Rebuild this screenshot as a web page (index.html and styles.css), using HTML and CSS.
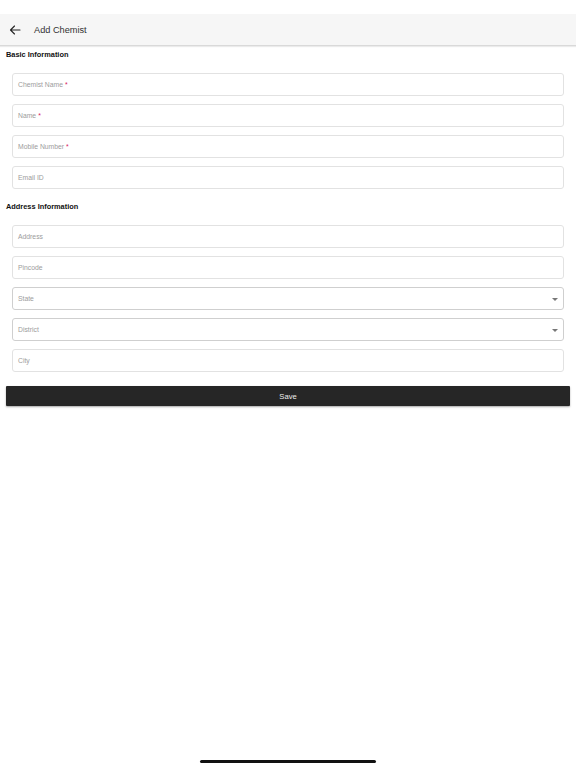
FILE: index.html
```html
<!DOCTYPE html>
<html>
<head>
<meta charset="utf-8">
<link rel="stylesheet" href="styles.css">
</head>
<body>
<div class="screen">
  <div class="status"></div>
  <header class="appbar">
    <svg class="back" width="12" height="10" viewBox="0 0 12 10">
      <path d="M11 5H1.5M5.5 1L1.5 5l4 4" fill="none" stroke="#222" stroke-width="1.1" stroke-linecap="round" stroke-linejoin="round"/>
    </svg>
    <span class="title">Add Chemist</span>
  </header>
  <main class="content">
    <div class="section-title">Basic Information</div>
    <div class="fields">
      <div class="field">Chemist Name <span class="req">*</span></div>
      <div class="field">Name <span class="req">*</span></div>
      <div class="field">Mobile Number <span class="req">*</span></div>
      <div class="field">Email ID</div>
    </div>
    <div class="section-title second">Address Information</div>
    <div class="fields">
      <div class="field">Address</div>
      <div class="field">Pincode</div>
      <div class="field select">State<span class="caret"></span></div>
      <div class="field select">District<span class="caret"></span></div>
      <div class="field">City</div>
    </div>
    <button class="save">Save</button>
  </main>
  <div class="home-indicator"></div>
</div>
</body>
</html>
```
FILE: styles.css
```css
* { box-sizing: border-box; }
html, body { margin: 0; padding: 0; background: #fff; }
body { font-family: "Liberation Sans", Arial, sans-serif; color: #222; }
.screen { position: relative; width: 576px; height: 768px; overflow: hidden; background: #fff; }
.status { height: 14px; background: #fff; }
.appbar {
  height: 32px;
  background: #f6f6f6;
  display: flex;
  align-items: center;
  padding-left: 9px;
  border-bottom: 1px solid #d9d9d9;
  box-shadow: 0 1px 1px rgba(0,0,0,0.08);
}
.back { display: block; margin-right: 13px; }
.title { font-size: 9.2px; color: #333; }
.content { padding: 0 6px; }
.section-title {
  font-size: 7.4px;
  font-weight: bold;
  line-height: 12px;
  padding-top: 3px;
  color: #111;
}
.section-title.second { padding-top: 12px; }
.fields {
  display: flex;
  flex-direction: column;
  gap: 8px;
  padding: 12px 6px 0;
}
.field {
  position: relative;
  height: 23px;
  border: 1px solid #e2e2e2;
  border-radius: 3px;
  display: flex;
  align-items: center;
  padding-left: 5px;
  font-size: 6.8px;
  color: #9c9c9c;
}
.field.select { border-color: #cfcfcf; }
.req { color: #d81b60; margin-left: 2px; }
.caret {
  position: absolute;
  right: 5px;
  top: 50%;
  margin-top: -1px;
  width: 0; height: 0;
  border-left: 3px solid transparent;
  border-right: 3px solid transparent;
  border-top: 3px solid #777;
}
.save {
  display: block;
  width: 100%;
  height: 20px;
  margin-top: 14px;
  border: none;
  border-radius: 1px;
  background: #262626;
  color: #eee;
  font-family: "Liberation Sans", Arial, sans-serif;
  font-size: 7.6px;
  box-shadow: 0 1px 2px rgba(0,0,0,0.35);
}
.home-indicator {
  position: absolute;
  left: 200px;
  top: 760px;
  width: 176px;
  height: 3px;
  border-radius: 2px;
  background: #111;
}
```
